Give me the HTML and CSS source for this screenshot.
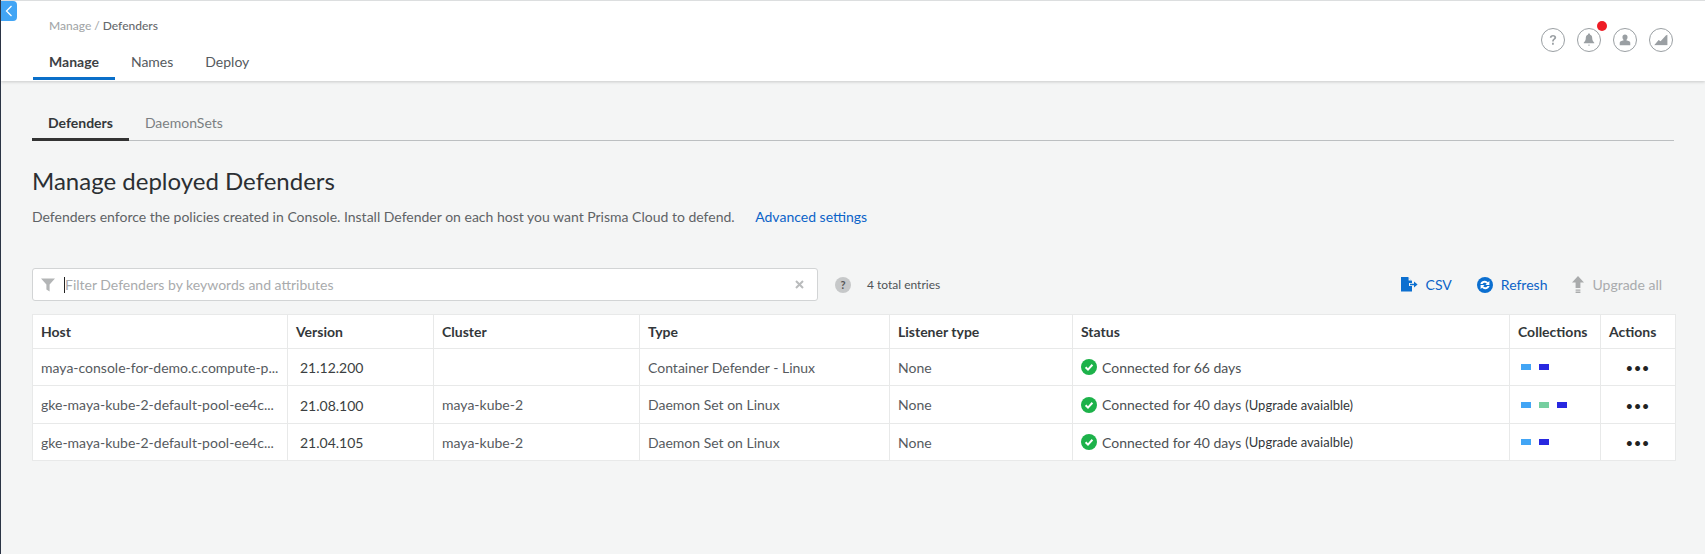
FILE: index.html
```html
<!DOCTYPE html>
<html lang="en">
<head>
    <meta charset="UTF-8">
    <title>Manage Defenders</title>
    <link rel="stylesheet" href="styles.css">
</head>
<body>
    <button class="collapse" aria-label="Collapse">
        <svg width="8" height="12" viewBox="0 0 8 12"><path d="M6.5 1 L1.5 6 L6.5 11" fill="none" stroke="#fff" stroke-width="1.3"/></svg>
    </button>
    <header class="topbar">
        <div class="topbar-left">
            <div class="crumbs"><span class="crumb-dim">Manage /</span> Defenders</div>
            <nav class="main-tabs">
                <a class="main-tab active">Manage</a>
                <a class="main-tab">Names</a>
                <a class="main-tab">Deploy</a>
            </nav>
        </div>
        <div class="top-icons">
            <span class="round-icon">
                <svg width="14" height="16" viewBox="0 0 14 16"><path d="M3 5.2 C3 2.8 4.8 1.6 7 1.6 C9.3 1.6 11 2.9 11 5 C11 7.6 7.9 7.5 7.9 10 L5.9 10 C5.9 6.7 8.7 6.8 8.7 5 C8.7 4 8 3.5 7 3.5 C5.9 3.5 5.2 4.2 5.2 5.2 Z M5.8 11.4 H8 V13.8 H5.8 Z" fill="#9a9fa3"/></svg>
            </span>
            <span class="round-icon">
                <svg width="16" height="18" viewBox="0 0 16 18"><path d="M8 1 C9 1 9.4 1.7 9.4 2.4 C11.4 3 12 4.6 12 6.6 C12 9.6 13.2 11 14.6 12.4 V13 H1.4 V12.4 C2.8 11 4 9.6 4 6.6 C4 4.6 4.6 3 6.6 2.4 C6.6 1.7 7 1 8 1 Z M6.6 15 H9.4 L8 16.6 Z" fill="#9a9fa3"/></svg>
                <span class="red-dot"></span>
            </span>
            <span class="round-icon">
                <svg width="16" height="16" viewBox="0 0 16 16"><path d="M8 1 C10 1 11.2 2.4 11.2 4.4 C11.2 6.2 10.4 7.6 9.6 8.2 C12.4 8.8 14.6 9.6 14.6 11.4 V14.6 H1.4 V11.4 C1.4 9.6 3.6 8.8 6.4 8.2 C5.6 7.6 4.8 6.2 4.8 4.4 C4.8 2.4 6 1 8 1 Z" fill="#9a9fa3"/></svg>
            </span>
            <span class="round-icon">
                <svg width="18" height="14" viewBox="0 0 18 14"><path d="M0.5 13.5 L6 7 L8.5 8.5 L15 1.5 L17 0.5 V13.5 Z" fill="#9a9fa3"/></svg>
            </span>
        </div>
    </header>

    <main class="content">
        <nav class="sub-tabs">
            <a class="sub-tab active">Defenders</a>
            <a class="sub-tab">DaemonSets</a>
        </nav>

        <h1>Manage deployed Defenders</h1>
        <p class="intro">Defenders enforce the policies created in Console. Install Defender on each host you want Prisma Cloud to defend. <a class="link intro-link">Advanced settings</a></p>

        <div class="toolbar">
            <div class="filter">
                <svg width="14" height="14" viewBox="0 0 14 14"><path d="M0 0.5 H14 L8.6 6.6 V13.5 L5.4 11.6 V6.6 Z" fill="#b3b5b6"/></svg>
                <span class="caret"></span>
                <span class="filter-text">Filter Defenders by keywords and attributes</span>
                <svg class="clear" width="9" height="9" viewBox="0 0 9 9"><path d="M1 1 L8 8 M8 1 L1 8" stroke="#b9bbbc" stroke-width="2"/></svg>
            </div>
            <span class="help">?</span>
            <span class="entries">4 total entries</span>
            <div class="actions">
                <a class="action link">
                    <svg width="17" height="15" viewBox="0 0 17 15"><path d="M0 0 H7 L11 4 V6 H8 V9 H11 V14.5 H0 Z M7.6 0.6 V3.6 H10.6 Z M9 6.8 H13 V4.6 L16.6 7.5 L13 10.4 V8.2 H9 Z" fill="#0b6fd0" fill-rule="evenodd"/></svg>
                    CSV
                </a>
                <a class="action link">
                    <svg width="16" height="16" viewBox="0 0 16 16"><circle cx="8" cy="8" r="8" fill="#0b6fd0"/><path d="M3.4 7 C3.9 4.8 6 3.6 8 3.8 C9.2 3.9 10.2 4.4 10.9 5.2 L12.4 4 V8 H8.4 L9.8 6.7 C9.3 6 8.7 5.7 7.9 5.7 C6.9 5.7 6 6.2 5.6 7 Z M12.6 9 C12.1 11.2 10 12.4 8 12.2 C6.8 12.1 5.8 11.6 5.1 10.8 L3.6 12 V8 H7.6 L6.2 9.3 C6.7 10 7.3 10.3 8.1 10.3 C9.1 10.3 10 9.8 10.4 9 Z" fill="#fff"/></svg>
                    Refresh
                </a>
                <a class="action disabled">
                    <svg width="12" height="17" viewBox="0 0 12 17"><path d="M6 0 L12 6.5 H8.4 V12 H3.6 V6.5 H0 Z M3.6 13.4 H8.4 V14.8 H3.6 Z M3.6 15.6 H8.4 V17 H3.6 Z" fill="#a9abac"/></svg>
                    Upgrade all
                </a>
            </div>
        </div>

        <table class="defenders">
            <colgroup>
                <col class="col-host">
                <col class="col-version">
                <col class="col-cluster">
                <col class="col-type">
                <col class="col-listener">
                <col class="col-status">
                <col class="col-collections">
                <col class="col-actions">
            </colgroup>
            <thead>
                <tr>
                    <th>Host</th>
                    <th>Version</th>
                    <th>Cluster</th>
                    <th>Type</th>
                    <th>Listener type</th>
                    <th>Status</th>
                    <th>Collections</th>
                    <th>Actions</th>
                </tr>
            </thead>
            <tbody>
                <tr>
                    <td class="host">maya-console-for-demo.c.compute-p...</td>
                    <td class="version raised">21.12.200</td>
                    <td></td>
                    <td>Container Defender - Linux</td>
                    <td>None</td>
                    <td>
                        <div class="status">
                            <svg width="16" height="16" viewBox="0 0 16 16"><circle cx="8" cy="8" r="8" fill="#1db24a"/><path d="M4.6 8.2 L7 10.6 L11.4 5.8" fill="none" stroke="#fff" stroke-width="2"/></svg>
                            <span>Connected for 66 days</span>
                        </div>
                    </td>
                    <td><div class="bars"><i class="bar sky"></i><i class="bar indigo"></i></div></td>
                    <td class="more">&middot;&middot;&middot;</td>
                </tr>
                <tr>
                    <td class="host">gke-maya-kube-2-default-pool-ee4c...</td>
                    <td class="version lowered">21.08.100</td>
                    <td>maya-kube-2</td>
                    <td>Daemon Set on Linux</td>
                    <td>None</td>
                    <td>
                        <div class="status">
                            <svg width="16" height="16" viewBox="0 0 16 16"><circle cx="8" cy="8" r="8" fill="#1db24a"/><path d="M4.6 8.2 L7 10.6 L11.4 5.8" fill="none" stroke="#fff" stroke-width="2"/></svg>
                            <span>Connected for 40 days</span>
                            <span class="upgrade">(Upgrade avaialble)</span>
                        </div>
                    </td>
                    <td><div class="bars"><i class="bar sky"></i><i class="bar mint"></i><i class="bar indigo"></i></div></td>
                    <td class="more">&middot;&middot;&middot;</td>
                </tr>
                <tr>
                    <td class="host">gke-maya-kube-2-default-pool-ee4c...</td>
                    <td class="version">21.04.105</td>
                    <td>maya-kube-2</td>
                    <td>Daemon Set on Linux</td>
                    <td>None</td>
                    <td>
                        <div class="status">
                            <svg width="16" height="16" viewBox="0 0 16 16"><circle cx="8" cy="8" r="8" fill="#1db24a"/><path d="M4.6 8.2 L7 10.6 L11.4 5.8" fill="none" stroke="#fff" stroke-width="2"/></svg>
                            <span>Connected for 40 days</span>
                            <span class="upgrade">(Upgrade avaialble)</span>
                        </div>
                    </td>
                    <td><div class="bars"><i class="bar sky"></i><i class="bar indigo"></i></div></td>
                    <td class="more">&middot;&middot;&middot;</td>
                </tr>
            </tbody>
        </table>
    </main>
</body>
</html>
```

FILE: styles.css
```css
html, body {
    height: 100%;
}
body {
    margin: 0;
    box-sizing: border-box;
    height: 554px;
    overflow: hidden;
    font-family: Lato, sans-serif;
    font-size: 14px;
    color: #5f6366;
    background-color: #f4f5f5;
    border-left: 1px solid #2b3445;
}
.collapse {
    position: absolute;
    left: 1px;
    top: 1px;
    width: 16px;
    height: 20px;
    padding: 0;
    border: 0;
    border-radius: 0 4px 4px 0;
    background: #42a5f5;
    display: flex;
    align-items: center;
    justify-content: center;
}
.topbar {
    height: 81px;
    box-sizing: border-box;
    border-top: 1px solid #dcdedf;
    background: #fff;
    box-shadow: 0 1px 3px rgba(0, 0, 0, 0.18);
    display: flex;
    justify-content: space-between;
}
.topbar-left {
    padding: 17px 0 0 32px;
}
.crumbs {
    padding-left: 16px;
    font-size: 12px;
    line-height: 15px;
    color: #666a6d;
    font-weight: 500;
}
.crumb-dim {
    color: #a4a7a9;
}
.main-tabs {
    display: flex;
    margin-top: 15px;
}
.main-tab {
    padding: 0 16px;
    height: 32px;
    line-height: 27px;
    color: #555a5e;
    box-sizing: border-box;
}
.main-tab + .main-tab {
    padding: 0 16px;
}
.main-tab.active {
    border-bottom: 3px solid #0a6fc9;
    color: #3d4145;
    font-weight: 700;
}
.top-icons {
    display: flex;
    gap: 12px;
    padding: 27px 32px 0 0;
}
.round-icon {
    position: relative;
    width: 24px;
    height: 24px;
    box-sizing: border-box;
    border: 1px solid #9a9fa3;
    border-radius: 50%;
    display: flex;
    align-items: center;
    justify-content: center;
}
.round-icon svg {
    transform: scale(0.8);
}
.red-dot {
    position: absolute;
    right: -7px;
    top: -8px;
    width: 10px;
    height: 10px;
    border-radius: 50%;
    background: #ee1c25;
}
.content {
    padding: 25px 31px 0 31px;
}
.sub-tabs {
    display: flex;
    height: 35px;
    box-sizing: border-box;
    border-bottom: 1px solid #bcbfc1;
}
.sub-tab {
    padding: 0 16px;
    height: 35px;
    box-sizing: border-box;
    line-height: 34px;
    color: #7b7f82;
}
.sub-tab.active {
    border-bottom: 3px solid #333;
    color: #33373a;
    font-weight: 700;
}
h1 {
    margin: 25px 0 0;
    font-size: 24px;
    line-height: 30px;
    font-weight: 400;
    color: #2b2f33;
}
.intro {
    margin: 12px 0 0;
    line-height: 17px;
}
.intro-link {
    margin-left: 17px;
}
.link {
    color: #0b63c8;
}
.toolbar {
    display: flex;
    align-items: center;
    margin-top: 43px;
    height: 33px;
}
.filter {
    width: 786px;
    height: 33px;
    box-sizing: border-box;
    display: flex;
    align-items: center;
    padding: 0 13px 0 8px;
    background: #fff;
    border: 1px solid #d2d4d5;
    border-radius: 3px;
}
.caret {
    width: 1px;
    height: 16px;
    margin-left: 9px;
    background: #222;
}
.filter-text {
    flex: 1;
    color: #a9abad;
}
.clear {
    flex: none;
}
.help {
    width: 16px;
    height: 16px;
    margin-left: 17px;
    border-radius: 50%;
    background: #c6c8c9;
    color: #555;
    font-size: 11px;
    font-weight: 700;
    line-height: 16px;
    text-align: center;
}
.entries {
    margin-left: 16px;
    font-size: 12px;
    color: #4f5356;
}
.actions {
    margin-left: auto;
    display: flex;
    align-items: center;
    gap: 25px;
    padding-right: 12px;
}
.action {
    display: flex;
    align-items: center;
    gap: 8px;
}
.action.disabled {
    color: #a9abad;
}
.defenders {
    margin-top: 13px;
    width: 1643px;
    border-collapse: collapse;
    table-layout: fixed;
    background: #fff;
    color: #565a5e;
}
.col-host { width: 255px; }
.col-version { width: 146px; }
.col-cluster { width: 206px; }
.col-type { width: 250px; }
.col-listener { width: 183px; }
.col-status { width: 437px; }
.col-collections { width: 91px; }
.col-actions { width: 75px; }
.defenders th, .defenders td {
    border: 1px solid #e8e9e9;
    padding: 0 8px;
    white-space: nowrap;
    text-align: left;
    overflow: hidden;
}
.defenders th {
    height: 33px;
    color: #33373a;
    font-weight: 700;
}
.defenders td {
    height: 36px;
}
.defenders .version {
    padding-left: 12px;
    color: #3b3f42;
}
.raised {
    padding-bottom: 3px;
}
.defenders .lowered {
    padding-top: 1px;
}
.status {
    display: flex;
    align-items: center;
    gap: 5px;
    color: #4d5154;
}
.status svg {
    flex: none;
}
.upgrade {
    font-size: 13px;
    color: #33373a;
    margin-left: -1px;
}
.bars {
    display: flex;
    gap: 8px;
    padding-left: 3px;
}
.bar {
    width: 10px;
    height: 6px;
}
.sky { background: #42a5f5; }
.mint { background: #76cfa0; }
.indigo { background: #2828e0; }
.defenders .more {
    padding: 0;
    text-align: center;
    font-size: 26px;
    line-height: 20px;
    font-weight: 700;
    color: #222;
    letter-spacing: 1px;
}
```
